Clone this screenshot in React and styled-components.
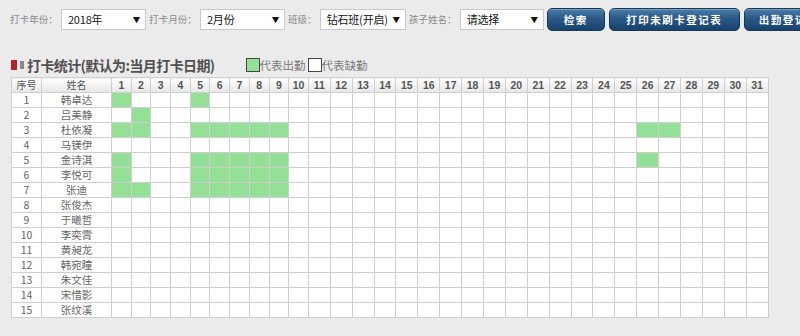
import React from 'react'
import styled, { createGlobalStyle } from 'styled-components'

const GlobalStyle = createGlobalStyle`
  body {
    margin: 0;
    background: #ebebeb;
    font-family: "Noto Sans CJK SC", "Liberation Sans", sans-serif;
  }
`

const Page = styled.div`
  width: 800px;
  height: 336px;
  overflow: hidden;
  padding: 8px 0 0 10px;
  box-sizing: border-box;
`

const Toolbar = styled.div`
  display: flex;
  align-items: center;
  height: 22px;
  white-space: nowrap;
`

const Label = styled.span`
  font-size: 9.6px;
  color: #8a8a8a;
  margin: 0 3px 0 ${p => p.$gap || 0}px;
`

const FakeSelect = styled.div`
  display: flex;
  align-items: center;
  justify-content: space-between;
  width: ${p => p.$width}px;
  height: 21px;
  box-sizing: border-box;
  padding: 0 5px 0 6px;
  background: #fff;
  border: 1px solid #c9c9c9;
  font-size: 11px;
  letter-spacing: -0.2px;
  color: #151515;
  flex-shrink: 0;
`

const Arrow = styled.span`
  font-size: 7.5px;
  color: #111;
`

const Button = styled.button`
  flex-shrink: 0;
  height: 23px;
  width: ${p => p.$width}px;
  margin-left: ${p => p.$gap}px;
  padding: 0;
  border: 1px solid #1a3857;
  border-radius: 5px;
  background: linear-gradient(#4b7eab, #2a5987 45%, #17426d);
  color: #fff;
  font-family: inherit;
  font-size: 10.5px;
  font-weight: bold;
  letter-spacing: 1.5px;
  box-shadow: inset 0 1px 0 rgba(255, 255, 255, 0.25);
`

const TitleRow = styled.div`
  display: flex;
  align-items: center;
  margin: 24px 0 0 1px;
  height: 22px;
`

const Marker = styled.span`
  display: inline-block;
  width: 6px;
  height: 10px;
  background: #b4232b;
  box-shadow: 8px 0 0 -1px #8a8a8a;
  margin-right: 10px;
`

const Title = styled.h3`
  margin: 0;
  font-size: 14px;
  letter-spacing: -0.6px;
  font-weight: bold;
  color: #505050;
`

const Legend = styled.div`
  display: flex;
  align-items: center;
  margin-left: 31px;
`

const Swatch = styled.span`
  display: inline-block;
  width: 12px;
  height: 12px;
  border: 1px solid #444;
  background: ${p => (p.$on ? '#94e096' : '#fff')};
  margin-left: ${p => p.$gap || 0}px;
`

const LegendText = styled.span`
  font-size: 11.5px;
  color: #7a7a7a;
`

const Table = styled.table`
  margin: 1px 0 0 1px;
  border-collapse: collapse;
  table-layout: fixed;
  width: 757px;
  background: #fff;
`

const HeadCell = styled.th`
  height: 14px;
  padding: 0;
  border: 1px solid #cfcfcf;
  background: linear-gradient(#ffffff, #e6e6e6);
  font-size: ${p => (p.$day ? '10.5px' : '10px')};
  font-weight: ${p => (p.$day ? 'bold' : 'normal')};
  font-family: ${p => (p.$day ? '"Liberation Sans", sans-serif' : 'inherit')};
  color: #555;
  line-height: 14px;
`

const Cell = styled.td`
  height: 14px;
  padding: 0;
  border: 1px solid #cfcfcf;
  background: ${p => (p.$on ? '#94e096' : '#fff')};
  text-align: center;
  font-size: 10.5px;
  color: #666;
  line-height: 14px;
`

const students = [
  ['韩卓达', [1, 5]],
  ['吕美静', [2]],
  ['杜依凝', [1, 2, 5, 6, 7, 8, 9, 26, 27]],
  ['马镁伊', []],
  ['金诗淇', [1, 5, 6, 7, 8, 9, 26]],
  ['李悦可', [1, 5, 6, 7, 8, 9]],
  ['张迪', [1, 2, 5, 6, 7, 8, 9]],
  ['张俊杰', []],
  ['于曦哲', []],
  ['李奕霄', []],
  ['黄昶龙', []],
  ['韩宛瞳', []],
  ['朱文佳', []],
  ['宋惜影', []],
  ['张纹溪', []],
]

const days = Array.from({ length: 31 }, (_, i) => i + 1)

const colWidth = d => (d <= 10 ? 19.7 : 21.9)

const App = () => (
  <Page>
    <GlobalStyle />
    <Toolbar>
      <Label>打卡年份：</Label>
      <FakeSelect $width={85}>2018年<Arrow>▼</Arrow></FakeSelect>
      <Label $gap={3}>打卡月份：</Label>
      <FakeSelect $width={85}>2月份<Arrow>▼</Arrow></FakeSelect>
      <Label $gap={3}>班级：</Label>
      <FakeSelect $width={86}>钻石班(开启)<Arrow>▼</Arrow></FakeSelect>
      <Label $gap={3}>孩子姓名：</Label>
      <FakeSelect $width={84}>请选择<Arrow>▼</Arrow></FakeSelect>
      <Button $width={58} $gap={3}>检索</Button>
      <Button $width={131} $gap={4}>打印未刷卡登记表</Button>
      <Button $width={90} $gap={4}>出勤登记表</Button>
    </Toolbar>

    <TitleRow>
      <Marker />
      <Title>打卡统计(默认为:当月打卡日期)</Title>
      <Legend>
        <Swatch $on />
        <LegendText>代表出勤</LegendText>
        <Swatch $gap={2} />
        <LegendText>代表缺勤</LegendText>
      </Legend>
    </TitleRow>

    <Table>
      <colgroup>
        <col style={{ width: 30 }} />
        <col style={{ width: 70 }} />
        {days.map(d => <col key={d} style={{ width: colWidth(d) }} />)}
      </colgroup>
      <thead>
        <tr>
          <HeadCell>序号</HeadCell>
          <HeadCell>姓名</HeadCell>
          {days.map(d => <HeadCell key={d} $day>{d}</HeadCell>)}
        </tr>
      </thead>
      <tbody>
        {students.map(([name, present], i) => (
          <tr key={name}>
            <Cell>{i + 1}</Cell>
            <Cell>{name}</Cell>
            {days.map(d => <Cell key={d} $on={present.includes(d)} />)}
          </tr>
        ))}
      </tbody>
    </Table>
  </Page>
)

export default App
